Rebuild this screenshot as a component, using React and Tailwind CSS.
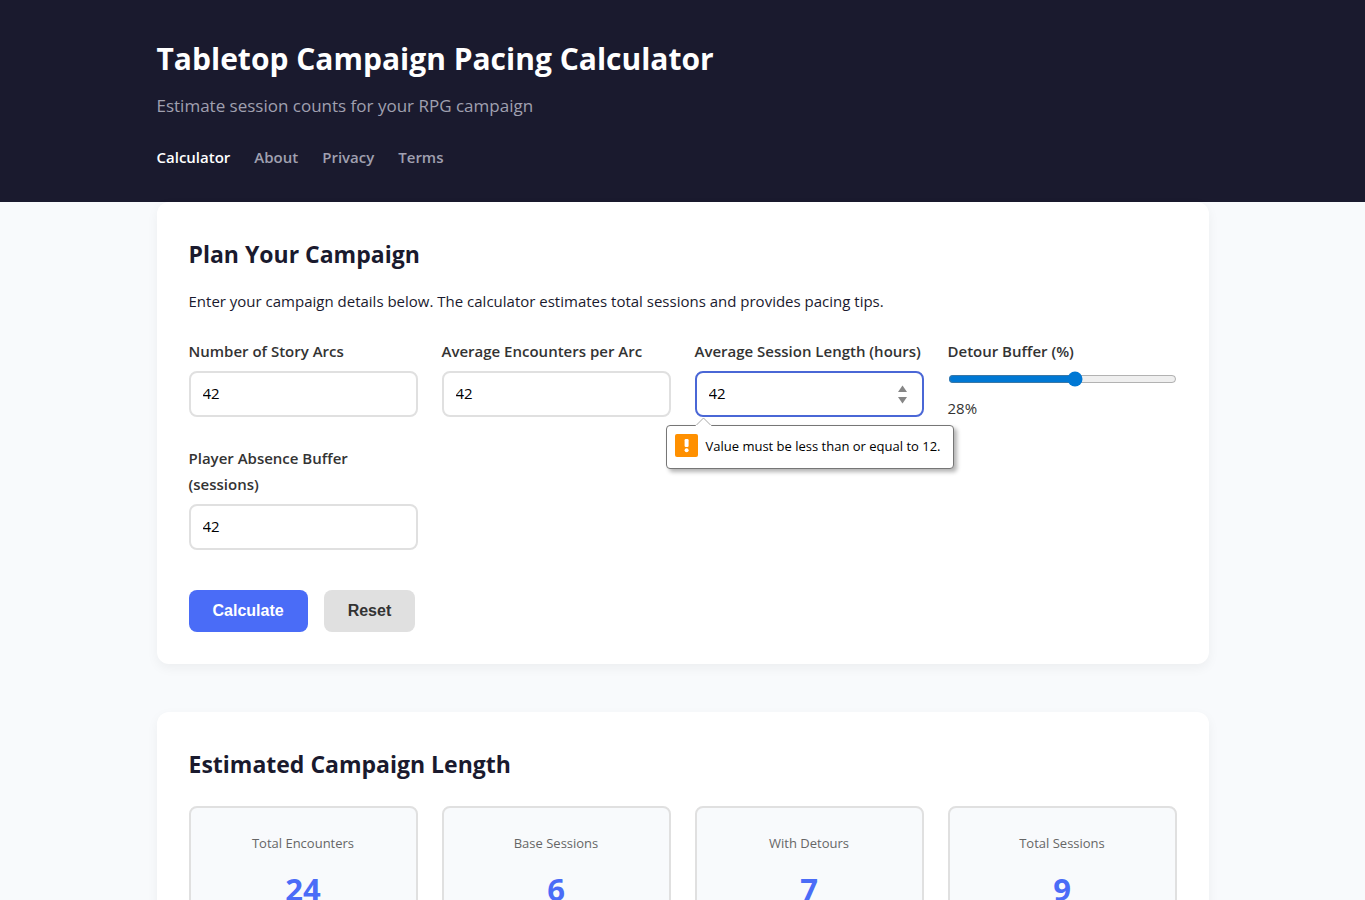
import React, { useState } from 'react';

const navLinks = ['Calculator', 'About', 'Privacy', 'Terms'];

const stats = [
  { label: 'Total Encounters', value: 24 },
  { label: 'Base Sessions', value: 6 },
  { label: 'With Detours', value: 7 },
  { label: 'Total Sessions', value: 9 },
];

const defaults = { arcs: 42, encounters: 42, length: 42, buffer: 28, absence: 42 };

const labelClass = 'block mb-[7px] text-[15px] leading-[26px] font-semibold text-[#333333]';

const NumberField = ({ id, label, value, onChange, invalid, children }) => (
  <div>
    <label htmlFor={id} className={labelClass}>{label}</label>
    <div className="relative">
      <input
        id={id}
        type="number"
        value={value}
        onChange={e => onChange(id, e.target.value)}
        className={`block w-full h-[46px] rounded-lg border-2 bg-white px-3 pb-0.5 text-[15px] text-black outline-none [appearance:textfield] ${
          invalid ? 'border-[#4a67d6]' : 'border-[#e0e0e0]'
        }`}
      />
      {invalid && (
        <svg className="absolute right-4 top-[14px] pointer-events-none" width="11" height="19" viewBox="0 0 11 19" fill="#868686">
          <path d="M5.5 0.5 L10 7 H1 Z" />
          <path d="M5.5 18.5 L10 12 H1 Z" />
        </svg>
      )}
      {children}
    </div>
  </div>
);

const ValidationBubble = ({ message }) => (
  <div
    role="alert"
    className="absolute z-10 top-[54px] -left-[29px] flex items-center gap-2 h-11 w-[288px] pl-2 rounded border border-[#767676] bg-white shadow-[3px_3px_4px_rgba(0,0,0,0.3)]"
  >
    <svg className="absolute left-7 -top-[9px]" width="18" height="10" viewBox="0 0 18 10">
      <path d="M0.5 9 L8.5 1 L16.5 9" fill="#ffffff" stroke="#a8a8a8" />
      <path d="M1 9 H16" stroke="#ffffff" strokeWidth="2" />
    </svg>
    <svg className="shrink-0 -mt-1" width="23" height="23" viewBox="0 0 23 23">
      <rect width="23" height="23" rx="2" fill="#ff9000" />
      <rect x="9.6" y="5" width="4" height="8" rx="1.2" fill="#ffffff" />
      <circle cx="11.6" cy="16.2" r="2" fill="#ffffff" />
    </svg>
    <span className="whitespace-nowrap text-[13px] text-black">{message}</span>
  </div>
);

const Card = ({ title, children }) => (
  <section className="rounded-xl bg-white p-8 shadow-[0_4px_12px_rgba(0,0,0,0.05)]">
    <h2 className="text-[23px] leading-[40px] font-bold text-[#1a1a2e]">{title}</h2>
    {children}
  </section>
);

const App = () => {
  const [form, setForm] = useState(defaults);

  const update = (key, value) => setForm(prev => ({ ...prev, [key]: value }));

  return (
    <div className="min-h-screen bg-[#f8fafc] font-['Open_Sans',sans-serif] text-[#1a1a2e]">
      <header className="bg-[#1a1a2e] py-8">
        <div className="mx-auto max-w-[1100px] px-6">
          <h1 className="mb-1.5 text-[30px] leading-[54px] font-bold text-white">Tabletop Campaign Pacing Calculator</h1>
          <p className="text-[17px] leading-7 text-[#a0a0b0]">Estimate session counts for your RPG campaign</p>
          <nav className="mt-6 flex gap-6">
            {navLinks.map((link, i) => (
              <a
                key={link}
                href="#"
                className={`text-[15px] leading-[26px] font-semibold ${i === 0 ? 'text-white' : 'text-[#a0a0b0]'}`}
              >
                {link}
              </a>
            ))}
          </nav>
        </div>
      </header>

      <main className="mx-auto flex max-w-[1100px] flex-col gap-12 px-6 pb-12">
        <Card title="Plan Your Campaign">
          <p className="mt-3.5 mb-6 text-[15px] leading-[26px]">
            Enter your campaign details below. The calculator estimates total sessions and provides pacing tips.
          </p>
          <form noValidate onSubmit={e => e.preventDefault()}>
            <div className="grid grid-cols-1 gap-6 sm:grid-cols-2 lg:grid-cols-4">
              <NumberField id="arcs" label="Number of Story Arcs" value={form.arcs} onChange={update} />
              <NumberField id="encounters" label="Average Encounters per Arc" value={form.encounters} onChange={update} />
              <NumberField
                id="length"
                label="Average Session Length (hours)"
                value={form.length}
                onChange={update}
                invalid={form.length > 12}
              >
                {form.length > 12 && <ValidationBubble message="Value must be less than or equal to 12." />}
              </NumberField>
              <div>
                <label htmlFor="buffer" className={labelClass}>Detour Buffer (%)</label>
                <input
                  id="buffer"
                  type="range"
                  min="0"
                  max="50"
                  value={form.buffer}
                  onChange={e => update('buffer', e.target.value)}
                  className="block h-4 w-full accent-[#0078d4]"
                />
                <output htmlFor="buffer" className="mt-2 block text-[15px] leading-[26px] text-[#333333]">{form.buffer}%</output>
              </div>
              <NumberField id="absence" label="Player Absence Buffer (sessions)" value={form.absence} onChange={update} />
            </div>
            <div className="mt-10 flex gap-4 font-['Liberation_Sans',Arial,sans-serif]">
              <button type="submit" className="h-[42px] rounded-lg bg-[#4a6cf7] px-6 text-base font-bold text-white">
                Calculate
              </button>
              <button
                type="button"
                onClick={() => setForm(defaults)}
                className="h-[42px] rounded-lg bg-[#e0e0e0] px-6 text-base font-bold text-[#333333]"
              >
                Reset
              </button>
            </div>
          </form>
        </Card>

        <Card title="Estimated Campaign Length">
          <div className="mt-[22px] grid grid-cols-2 gap-6 lg:grid-cols-4">
            {stats.map(stat => (
              <div key={stat.label} className="rounded-lg border-2 border-[#e0e0e0] bg-[#f8fafc] p-6 text-center">
                <p className="mb-2 text-[13px] leading-[22px] text-[#666666]">{stat.label}</p>
                <p className="text-[31px] leading-[55px] font-bold text-[#4a6cf7]">{stat.value}</p>
              </div>
            ))}
          </div>
        </Card>
      </main>
    </div>
  );
};

export default App;
